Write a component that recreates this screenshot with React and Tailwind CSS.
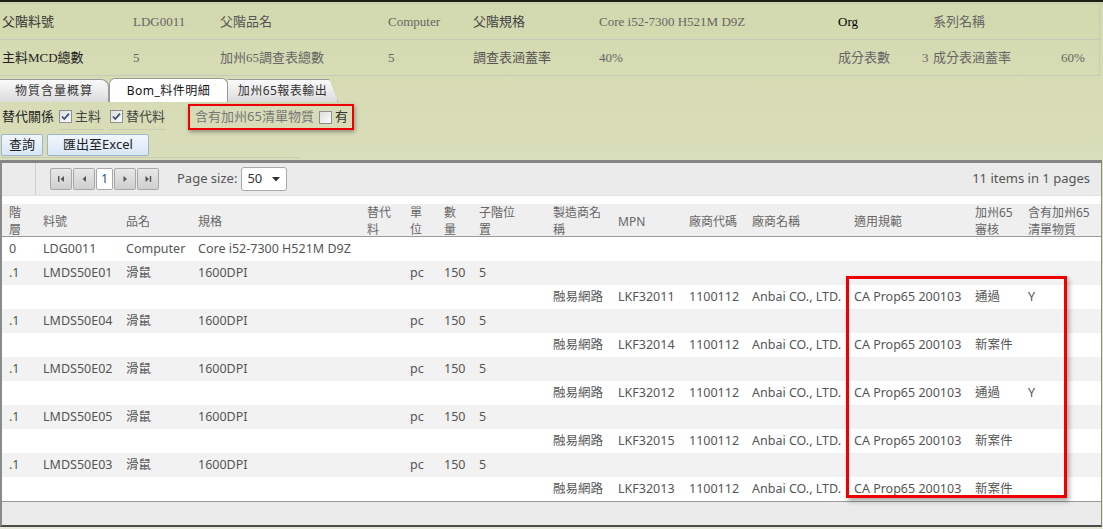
import React from 'react';

const sans = { fontFamily: '"Noto Sans", "Noto Sans CJK TC", sans-serif' };
const serif = { fontFamily: '"Liberation Serif", "Noto Sans CJK TC", serif' };

const COLS =
  'grid grid-cols-[34px_83px_72px_169px_43px_34px_35px_74px_65px_71px_63px_102px_121px_53px_80px]';

const headers = [
  ['階', '層'],
  ['料號'],
  ['品名'],
  ['規格'],
  ['替代', '料'],
  ['單', '位'],
  ['數', '量'],
  ['子階位', '置'],
  ['製造商名', '稱'],
  ['MPN'],
  ['廠商代碼'],
  ['廠商名稱'],
  ['適用規範'],
  ['加州65', '審核'],
  ['含有加州65', '清單物質'],
];

const part = (no) => ['.1', no, '滑鼠', '1600DPI', '', 'pc', '150', '5', '', '', '', '', '', '', ''];
const vendor = (mpn, status, y) => [
  '', '', '', '', '', '', '', '', '融易網路', mpn, '1100112', 'Anbai CO., LTD.', 'CA Prop65 200103', status, y,
];

const rows = [
  ['0', 'LDG0011', 'Computer', 'Core i52-7300 H521M D9Z', '', '', '', '', '', '', '', '', '', '', ''],
  part('LMDS50E01'),
  vendor('LKF32011', '通過', 'Y'),
  part('LMDS50E04'),
  vendor('LKF32014', '新案件', ''),
  part('LMDS50E02'),
  vendor('LKF32012', '通過', 'Y'),
  part('LMDS50E05'),
  vendor('LKF32015', '新案件', ''),
  part('LMDS50E03'),
  vendor('LKF32013', '新案件', ''),
];

function CheckBox({ checked }) {
  return (
    <svg width="13" height="13" viewBox="0 0 13 13" className="shrink-0">
      <defs>
        <linearGradient id="cbg" x1="0" y1="0" x2="1" y2="1">
          <stop offset="0" stopColor="#dcdcdc" />
          <stop offset="1" stopColor="#ffffff" />
        </linearGradient>
      </defs>
      <rect x="0.5" y="0.5" width="12" height="12" fill="url(#cbg)" stroke="#8e8f8f" />
      {checked && <path d="M3 6.5 L5.3 9 L10 3.6" fill="none" stroke="#3b4d7a" strokeWidth="1.8" />}
    </svg>
  );
}

function PagerBtn({ children }) {
  return (
    <div className="w-[22px] h-[22px] rounded-[2px] border border-[#a8a8a8] bg-gradient-to-b from-[#e8e8e8] to-[#cfcfcf] flex items-center justify-center">
      <svg width="10" height="10" viewBox="0 0 10 10">
        {children}
      </svg>
    </div>
  );
}

function TopRow({ cells, border }) {
  return (
    <div
      className={`grid grid-cols-[131px_87px_168px_85px_126px_239px_84px_11px_128px_1fr] h-[36px] items-center text-[13px] ${border}`}
      style={serif}
    >
      {cells.map((c, i) => (
        <div key={i} className={`pl-[2px] whitespace-nowrap ${c.cls || 'text-[#666]'}`}>
          {c.t}
        </div>
      ))}
    </div>
  );
}

export default function App() {
  return (
    <div className="relative w-[1103px] h-[529px] overflow-hidden bg-gradient-to-b from-[#d3d9ae] via-[#dde1c2] to-[#e7e9d8]">
      {/* header info table */}
      <div className="border-t-2 border-[#1d1f14] h-[4px] border-b border-b-[#c6c8b8]" />
      <div className="border-r border-[#c9cbbd] mr-[3px]">
        <TopRow
          border="border-b border-[#c7c9bb]"
          cells={[
            { t: '父階料號', cls: 'text-[#333]' },
            { t: 'LDG0011' },
            { t: '父階品名', cls: 'text-[#555]' },
            { t: 'Computer' },
            { t: '父階規格', cls: 'text-[#444]' },
            { t: 'Core i52-7300 H521M D9Z' },
            { t: 'Org', cls: 'text-black' },
            { t: '' },
            { t: '系列名稱', cls: 'text-[#666]' },
            { t: '' },
          ]}
        />
        <TopRow
          border="border-b border-[#c7c9bb]"
          cells={[
            { t: '主料MCD總數', cls: 'text-[#222]' },
            { t: '5' },
            { t: '加州65調查表總數', cls: 'text-[#666]' },
            { t: '5' },
            { t: '調查表涵蓋率', cls: 'text-[#555]' },
            { t: '40%' },
            { t: '成分表數', cls: 'text-[#666]' },
            { t: '3' },
            { t: '成分表涵蓋率', cls: 'text-[#666]' },
            { t: '60%' },
          ]}
        />
      </div>

      {/* tabs */}
      <div className="flex items-end h-[26px] text-[12px]" style={sans}>
        <div className="w-[109px] h-[23px] rounded-tr-[8px] border border-l-0 border-b-0 border-[#9a9a9a] bg-gradient-to-b from-[#fafafa] to-[#dcdcdc] flex items-center justify-center text-[#333] tracking-[1px]">
          物質含量概算
        </div>
        <div className="w-[119px] h-[24px] rounded-t-[6px] border border-b-0 border-[#9a9a9a] bg-white flex items-center justify-center text-[#111] tracking-[0.5px]">
          Bom_料件明細
        </div>
        <div className="w-[110px] h-[23px] rounded-tr-[10px] border border-l-0 border-b-0 border-[#9a9a9a] bg-gradient-to-b from-[#fafafa] to-[#dcdcdc] flex items-center justify-center text-[#333] tracking-[0.5px] [clip-path:polygon(0_0,92%_0,100%_100%,0_100%)]">
          加州65報表輸出
        </div>
      </div>

      {/* filters */}
      <div className="flex items-center h-[30px] text-[13px]" style={sans}>
        <div className="flex items-center h-[25px] pl-[2px]">
          <span className="text-[#222]">替代關係</span>
          <div className="flex items-center gap-[3px] ml-[5px] h-[25px] border-b border-[#c9cbb7] pr-[3px]">
            <CheckBox checked />
            <span className="text-[#444]">主料</span>
          </div>
          <div className="flex items-center gap-[3px] ml-[6px] h-[25px] border-b border-[#c9cbb7] pr-[1px]">
            <CheckBox checked />
            <span className="text-[#444]">替代料</span>
          </div>
        </div>
        <div className="ml-[22px] h-[26px] w-[166px] border-2 border-[#ee0000] shadow-[1px_2px_4px_rgba(0,0,0,0.35)] flex items-center pl-[5px]">
          <span className="text-[#777]">含有加州65清單物質</span>
          <div className="ml-[5px] flex items-center gap-[3px]">
            <CheckBox />
            <span className="text-[#333]">有</span>
          </div>
        </div>
      </div>

      {/* buttons */}
      <div className="flex items-center gap-[4px] h-[26px] pl-[1px] w-[300px] border-b border-[#c9cbb7] text-[13px]" style={sans}>
        <button className="h-[22px] w-[42px] rounded-[2px] border border-[#9fb3cc] bg-gradient-to-b from-[#f2f7fd] to-[#d8e6f6] text-[#222]">
          查詢
        </button>
        <button className="h-[22px] w-[102px] rounded-[2px] border border-[#9fb3cc] bg-gradient-to-b from-[#f2f7fd] to-[#d8e6f6] text-[#222]">
          匯出至Excel
        </button>
      </div>

      {/* grid */}
      <div className="mt-[2px] w-[1102px] border-t-[3px] border-t-[#858585] border-l-2 border-l-[#8a8a8a] border-r border-r-[#8a8a8a] border-b-2 border-b-[#4a4a4a] bg-white text-[12.5px]" style={sans}>
        {/* pager */}
        <div className="h-[32px] bg-[#ebebeb] flex items-center">
          <div className="w-[34px] h-full border-r border-[#cfcfcf]" />
          <div className="flex items-center ml-[14px] gap-[1px]">
            <PagerBtn>
              <rect x="2" y="2" width="1.4" height="6" fill="#555" />
              <path d="M8 2 L4.5 5 L8 8 Z" fill="#555" />
            </PagerBtn>
            <PagerBtn>
              <path d="M7 2 L3.5 5 L7 8 Z" fill="#555" />
            </PagerBtn>
            <div className="w-[17px] h-[22px] rounded-[2px] border border-[#a8a8a8] bg-white flex items-center justify-center text-[#1f5c99]">
              1
            </div>
            <PagerBtn>
              <path d="M3.5 2 L7 5 L3.5 8 Z" fill="#555" />
            </PagerBtn>
            <PagerBtn>
              <path d="M2.5 2 L6 5 L2.5 8 Z" fill="#555" />
              <rect x="6.8" y="2" width="1.4" height="6" fill="#555" />
            </PagerBtn>
          </div>
          <span className="ml-[18px] text-[#555] text-[13px]">Page size:</span>
          <div className="ml-[4px] h-[24px] w-[46px] rounded-[3px] border border-[#a8a8a8] bg-white flex items-center justify-between pl-[5px] pr-[6px] text-[#333] text-[13px]">
            <span>50</span>
            <svg width="8" height="5" viewBox="0 0 8 5">
              <path d="M0 0 L8 0 L4 4.5 Z" fill="#333" />
            </svg>
          </div>
          <span className="ml-auto mr-[11px] text-[#555] text-[13px]">11 items in 1 pages</span>
        </div>

        {/* header */}
        <div className="bg-white pt-[8px] border-t border-[#e2e2e2]">
          <div className={`${COLS} h-[33px] bg-[#efefef] border-b border-[#9a9a9a] text-[12px] text-[#666] leading-[17px]`}>
            {headers.map((h, i) => (
              <div key={i} className="pl-[7px] flex flex-col justify-center whitespace-nowrap">
                {h.map((l, j) => (
                  <span key={j}>{l}</span>
                ))}
              </div>
            ))}
          </div>
        </div>

        {/* rows */}
        {rows.map((r, i) => (
          <div key={i} className={`${COLS} h-[24px] items-center text-[#555] ${i % 2 ? 'bg-[#f2f2f2]' : 'bg-white'}`}>
            {r.map((c, j) => (
              <div key={j} className="pl-[7px] whitespace-nowrap overflow-hidden">
                {c}
              </div>
            ))}
          </div>
        ))}

        {/* footer */}
        <div className="h-[24px] bg-[#ebebeb] border-t border-[#9a9a9a]" />
      </div>

      {/* annotation box */}
      <div className="absolute left-[846px] top-[276px] w-[221px] h-[222px] border-[3px] border-[#ee0000] shadow-[2px_3px_5px_rgba(0,0,0,0.35)]" />
    </div>
  );
}
